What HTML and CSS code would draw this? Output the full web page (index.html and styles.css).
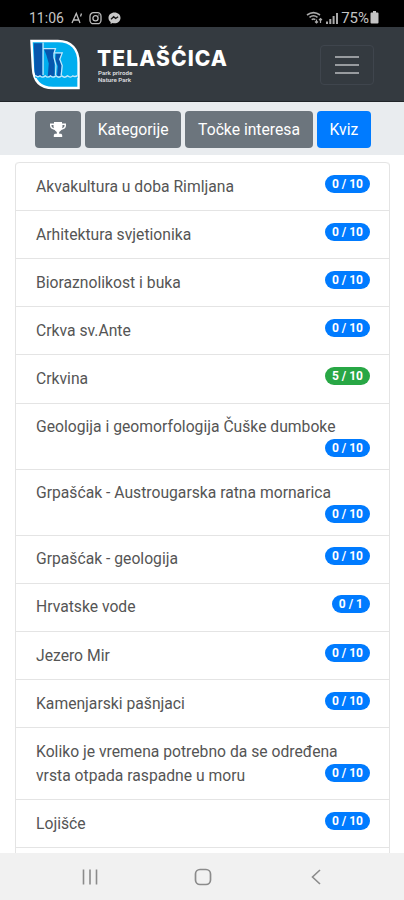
FILE: index.html
```html
<!DOCTYPE html>
<html lang="hr">
<head>
    <meta charset="UTF-8">
    <meta name="viewport" content="width=device-width, initial-scale=1.0">
    <title>Telašćica - Kviz</title>
    <link rel="stylesheet" href="styles.css">
</head>
<body>
    <div class="status-bar">
        <div class="status-left">
            <span class="clock">11:06</span>
            <svg class="status-apps" width="52" height="14" viewBox="0 0 52 14" fill="none" stroke="#bdbdbd" stroke-width="1.3">
                <path d="M1 12L5.300 2.500L9 12M2.500 9H7.500M10.500 2.500L9.500 5.500"/>
                <rect x="19" y="1.700" width="11" height="11" rx="3.500"/>
                <circle cx="24.500" cy="7.200" r="2.600"/>
                <path d="M27.500 4h.8"/>
                <path d="M43.500 1.500c-3.500 0-6 2.400-6 5.400 0 1.700.8 3.200 2.100 4.200v2l2-1.100c.6.200 1.200.3 1.900.3 3.500 0 6-2.400 6-5.400s-2.500-5.400-6-5.400z" fill="#c8c8c8" stroke="none"/>
                <path d="M40 8.300l2.700-2.600 1.900 1.800 2.500-1.800" stroke="#111"/>
            </svg>
        </div>
        <div class="status-right">
            <svg width="34" height="14" viewBox="0 0 34 14" fill="none" stroke="#aaa" stroke-width="1.600">
                <path d="M1 4Q7.500 -.8 14 4M3.500 6.300Q7.500 3.300 11.500 6.300M5.700 8.700Q7.500 7.300 9.300 8.700"/>
                <path d="M10.500 8.500V12M9 10.500L10.500 12L12 10.500M14.500 12V7.500M13 9L14.500 7.500L16 9" stroke-width="1.200"/>
                <path d="M21 13V10.500M24.300 13V8M27.600 13V5M31 13V2" stroke-width="2"/>
            </svg>
            <span>75%</span>
            <svg width="9" height="13" viewBox="0 0 9 13" fill="#c4c4c4">
                <path d="M3 0h3v1.500h1.500q1 0 1 1v9q0 1-1 1h-6q-1 0-1-1v-9q0-1 1-1H3z"/>
            </svg>
        </div>
    </div>

    <div class="header">
        <div class="brand">
            <svg class="logo" width="50" height="51" viewBox="0 0 52 52">
                <path d="M1.500 1.500H29C43 1.500 50.500 10 50.500 24V50.500H24C9 50.500 3.500 42 3 29Z" fill="#00aeef" stroke="#fff" stroke-width="2.500"/>
                <path d="M4 4H13V38H5.500Q4.500 33 4.500 28Z" fill="#0756ad"/>
                <path d="M14.500 10H26L24 17L25.500 24V38H18.500L19.500 25L17 16Z" fill="#0756ad"/>
                <path d="M27 14.500H33L30.500 20.500L33 27L31.500 38H28L29 28L26.500 21Z" fill="#0756ad"/>
                <path d="M13.600 3V9.500H26.500L25 14H33.500L31 20.500L33.500 27L32.500 37M13.600 9.500V37M25 14L25 19L27 27L26.500 37" fill="none" stroke="#c4e8fb" stroke-width="1.300"/>
                <path d="M5.500 37q2.500 3 5 .8q2.500 2.800 5.500 0q2.500 2.800 5.500 0q2.500 2.800 5.500 0q3 2.800 6 0q3 2.800 6 0q3 2.600 5.500 0q2.500 1.500 5-.5V40H5.500z" fill="#00aeef"/>
                <path d="M5.500 37q2.500 3 5 .8q2.500 2.800 5.500 0q2.500 2.800 5.500 0q2.500 2.800 5.500 0q3 2.800 6 0q3 2.800 6 0q3 2.600 5.500 0q2.500 1.500 5-.5" fill="none" stroke="#c4e8fb" stroke-width="1.400"/>
            </svg>
            <div class="brand-text">
                <div class="title">TELAŠĆICA</div>
                <div class="subtitle">Park prirode<br>Nature Park</div>
            </div>
        </div>
        <button class="menu-button" aria-label="Izbornik">
            <svg width="24" height="20" viewBox="0 0 24 20" stroke="#989b9f" stroke-width="2">
                <path d="M0 2H24M0 10H24M0 18H24"/>
            </svg>
        </button>
    </div>

    <div class="tabs">
        <button class="tab tab-icon" aria-label="Rezultati">
            <svg width="16" height="15" viewBox="0 0 16 15" fill="#fff">
                <path d="M4 0h8v1.500h4v2.300c0 2-2 3.800-4.700 4.100C10.600 8.900 9.500 9.500 9.200 10v1.700h1.300c1 0 1.700.7 1.700 1.700V15H3.800v-1.600c0-1 .7-1.700 1.700-1.700h1.300V10C6.500 9.500 5.400 8.900 4.700 7.900 2 7.600 0 5.800 0 3.800V1.500h4zM1.500 3v.8c0 1 1 2 2.400 2.400-.3-1-.5-2.100-.4-3.200zm13 0h-2c.1 1.100-.1 2.200-.4 3.200 1.400-.4 2.400-1.400 2.400-2.400z" fill-rule="evenodd"/>
            </svg>
        </button>
        <button class="tab">Kategorije</button>
        <button class="tab">Točke interesa</button>
        <button class="tab active">Kviz</button>
    </div>

    <div class="content">
        <div class="list">
            <div class="list-item">Akvakultura u doba Rimljana <span class="badge">0 / 10</span></div>
            <div class="list-item">Arhitektura svjetionika <span class="badge">0 / 10</span></div>
            <div class="list-item">Bioraznolikost i buka <span class="badge">0 / 10</span></div>
            <div class="list-item">Crkva sv.Ante <span class="badge">0 / 10</span></div>
            <div class="list-item">Crkvina <span class="badge success">5 / 10</span></div>
            <div class="list-item">Geologija i geomorfologija Čuške dumboke <span class="badge">0 / 10</span></div>
            <div class="list-item">Grpašćak - Austrougarska ratna mornarica <span class="badge">0 / 10</span></div>
            <div class="list-item">Grpašćak - geologija <span class="badge">0 / 10</span></div>
            <div class="list-item">Hrvatske vode <span class="badge">0 / 1</span></div>
            <div class="list-item">Jezero Mir <span class="badge">0 / 10</span></div>
            <div class="list-item">Kamenjarski pašnjaci <span class="badge">0 / 10</span></div>
            <div class="list-item">Koliko je vremena potrebno da se određena vrsta otpada raspadne u moru <span class="badge">0 / 10</span></div>
            <div class="list-item">Lojišće <span class="badge">0 / 10</span></div>
            <div class="list-item"></div>
        </div>
    </div>

    <div class="system-nav">
        <svg width="16" height="16" viewBox="0 0 16 16" stroke="#8b8b8b" stroke-width="1.600">
            <path d="M1.500 0.500V15.500M8 0.500V15.500M14.500 0.500V15.500"/>
        </svg>
        <svg width="18" height="18" viewBox="0 0 18 18" fill="none" stroke="#8b8b8b" stroke-width="1.700">
            <rect x="1.500" y="1.500" width="15" height="15" rx="4.500"/>
        </svg>
        <svg width="16" height="16" viewBox="0 0 16 16" fill="none" stroke="#8b8b8b" stroke-width="1.600">
            <path d="M12 1L4.500 8L12 15"/>
        </svg>
    </div>
</body>
</html>
```

FILE: styles.css
```css
* {
    box-sizing: border-box;
}

body {
    font-family: Roboto, "Liberation Sans", sans-serif;
    font-size: 15.700px;
    margin: 0;
    height: 100vh;
    display: flex;
    flex-direction: column;
    overflow: hidden;
    background-color: #fff;
}

svg {
    display: block;
}

.status-bar {
    flex: none;
    height: 27px;
    padding: 8px 25px 0 29px;
    background-color: #000;
    color: #c4c4c4;
    font-size: 14px;
    line-height: 20px;
    display: flex;
    justify-content: space-between;
}

.status-left,
.status-right {
    display: flex;
    align-items: center;
}

.clock {
    width: 42px;
}

.status-right {
    gap: 1px;
    font-size: 15px;
}

.header {
    flex: none;
    height: 75px;
    padding: 0 30px;
    background-color: #343a40;
    border-bottom: 1px solid #212529;
    display: flex;
    justify-content: space-between;
    align-items: center;
}

.brand {
    display: flex;
    gap: 17px;
    padding-top: 1px;
}

.brand-text {
    padding-top: 9px;
    color: #fff;
}

.title {
    font-family: Inter, sans-serif;
    font-size: 21px;
    font-weight: 800;
    line-height: 22px;
    letter-spacing: 1.100px;
}

.subtitle {
    padding-left: 1px;
    font-size: 6.200px;
    font-weight: 700;
    line-height: 7px;
    color: #d3d5d7;
}

.menu-button {
    width: 54px;
    height: 40px;
    margin-top: 2px;
    padding: 0;
    background: none;
    border: 1px solid #3f454d;
    border-radius: 4px;
    display: flex;
    justify-content: center;
    align-items: center;
}

.tabs {
    flex: none;
    height: 53px;
    padding: 1px 0 0 2px;
    background-color: #e9ecef;
    display: flex;
    justify-content: center;
    align-items: center;
    gap: 4px;
}

.tab {
    height: 37px;
    padding: 0 12.800px;
    background-color: #6c757d;
    color: #fff;
    border: none;
    border-radius: 4px;
    font-family: inherit;
    font-size: inherit;
    display: flex;
    align-items: center;
}

.tab-icon {
    padding: 0 15px;
}

.tab.active {
    background-color: #007bff;
}

.content {
    flex: 1;
    min-height: 0;
    overflow: hidden;
    padding: 7px 14px 0 15px;
}

.list {
    border: 1px solid #e4e4e4;
    border-top: none;
    border-radius: 4px 4px 0 0;
}

.list-item {
    display: flow-root;
    min-height: 48.120px;
    padding: 11.560px 19px 11.560px 20px;
    border-top: 1px solid #e4e4e4;
    color: #555;
    line-height: 24px;
}

.list-item:first-child {
    border-radius: 4px 4px 0 0;
}

.badge {
    float: right;
    height: 18px;
    padding: 0 7px;
    background-color: #007bff;
    color: #fff;
    border-radius: 9px;
    font-size: 12px;
    font-weight: 700;
    line-height: 18px;
}

.badge.success {
    background-color: #28a745;
}

.system-nav {
    flex: none;
    height: 47px;
    padding: 0 80px 0 82px;
    background-color: #f1f1f1;
    display: flex;
    justify-content: space-between;
    align-items: center;
}
```
